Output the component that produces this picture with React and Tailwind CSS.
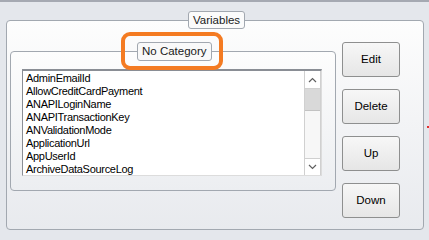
const items = [
  "AdminEmailId",
  "AllowCreditCardPayment",
  "ANAPILoginName",
  "ANAPITransactionKey",
  "ANValidationMode",
  "ApplicationUrl",
  "AppUserId",
  "ArchiveDataSourceLog",
];

const Chevron = ({ up }) => (
  <svg width="9" height="6" viewBox="0 0 9 6" className="block">
    <path
      d={up ? "M1 5 L4.5 1.5 L8 5" : "M1 1 L4.5 4.5 L8 1"}
      fill="none"
      stroke="#606060"
      strokeWidth="1.2"
    />
  </svg>
);

const Button = ({ label }) => (
  <button className="w-[58px] h-[35px] rounded-[3px] border border-[#8e8f8f] bg-gradient-to-b from-[#f7f7f7] to-[#e6e6e6] text-[11.5px] text-black">
    {label}
  </button>
);

const App = () => {
  return (
    <div
      className="relative w-[429px] h-[240px] overflow-hidden bg-[#e4e7ec] border-t-2 border-[#a5a9b2]"
      style={{ fontFamily: '"Liberation Sans", Arial, sans-serif' }}
    >
      {/* OUTER GROUP */}
      <div className="relative ml-[6px] mt-[18px] w-[418px] h-[210px] rounded-[4px] border border-[#a2a8b0] bg-gradient-to-b from-[#fdfdfd] to-[#e8eaee]">
        <div className="absolute left-[181px] top-[-10px] h-[18px] px-[4px] rounded-[3px] border border-[#a2a8b0] bg-[#fbfbfb] text-[11.5px] leading-[16px] text-[#1a1a1a]">
          Variables
        </div>

        <div className="flex items-start">
          {/* INNER GROUP */}
          <div className="relative ml-[3px] mt-[30px] w-[326px] h-[140px] rounded-[4px] border border-[#a2a8b0] bg-gradient-to-b from-[#fdfdfd] to-[#eceef1]">
            <div className="absolute left-[126px] top-[-10px] h-[19px] px-[4px] rounded-[3px] border border-[#a2a8b0] bg-[#f9f9f9] text-[11.5px] leading-[17px] text-[#1a1a1a]">
              No Category
            </div>

            {/* orange highlight */}
            <div className="absolute left-[110px] top-[-20px] w-[102px] h-[38px] rounded-[9px] border-4 border-[#f47b22]" />

            {/* LISTBOX */}
            <div className="ml-[11px] mt-[17px] w-[300px] h-[107px] flex bg-white border border-[#dcdcdc] border-t-2 border-t-[#8a8e95] border-l-[#8a8e95]">
              <div className="flex-1 pl-[3px] pt-[1px] text-[11px] leading-[13px] tracking-[-0.3px] text-black overflow-hidden">
                {items.map((item) => (
                  <div key={item}>{item}</div>
                ))}
              </div>

              {/* SCROLLBAR */}
              <div className="w-[17px] flex flex-col bg-[#f0f0f0] border-l border-r border-[#d0d0d0]">
                <div className="h-[18px] flex items-center justify-center bg-white border-b border-[#d0d0d0]">
                  <Chevron up />
                </div>
                <div className="h-[22px] bg-[#d9d9d9] border-b border-[#c2c2c2]" />
                <div className="flex-1 bg-[#f7f7f7]" />
                <div className="h-[17px] flex items-center justify-center bg-white border-t border-[#d0d0d0]">
                  <Chevron />
                </div>
              </div>
            </div>
          </div>

          {/* BUTTONS */}
          <div className="ml-[6px] mt-[21px] flex flex-col gap-[12px]">
            <Button label="Edit" />
            <Button label="Delete" />
            <Button label="Up" />
            <Button label="Down" />
          </div>
        </div>
      </div>

      <div className="absolute left-[427px] top-[124px] w-[2px] h-[2px] bg-[#e03030]" />
    </div>
  );
};

export default App;
